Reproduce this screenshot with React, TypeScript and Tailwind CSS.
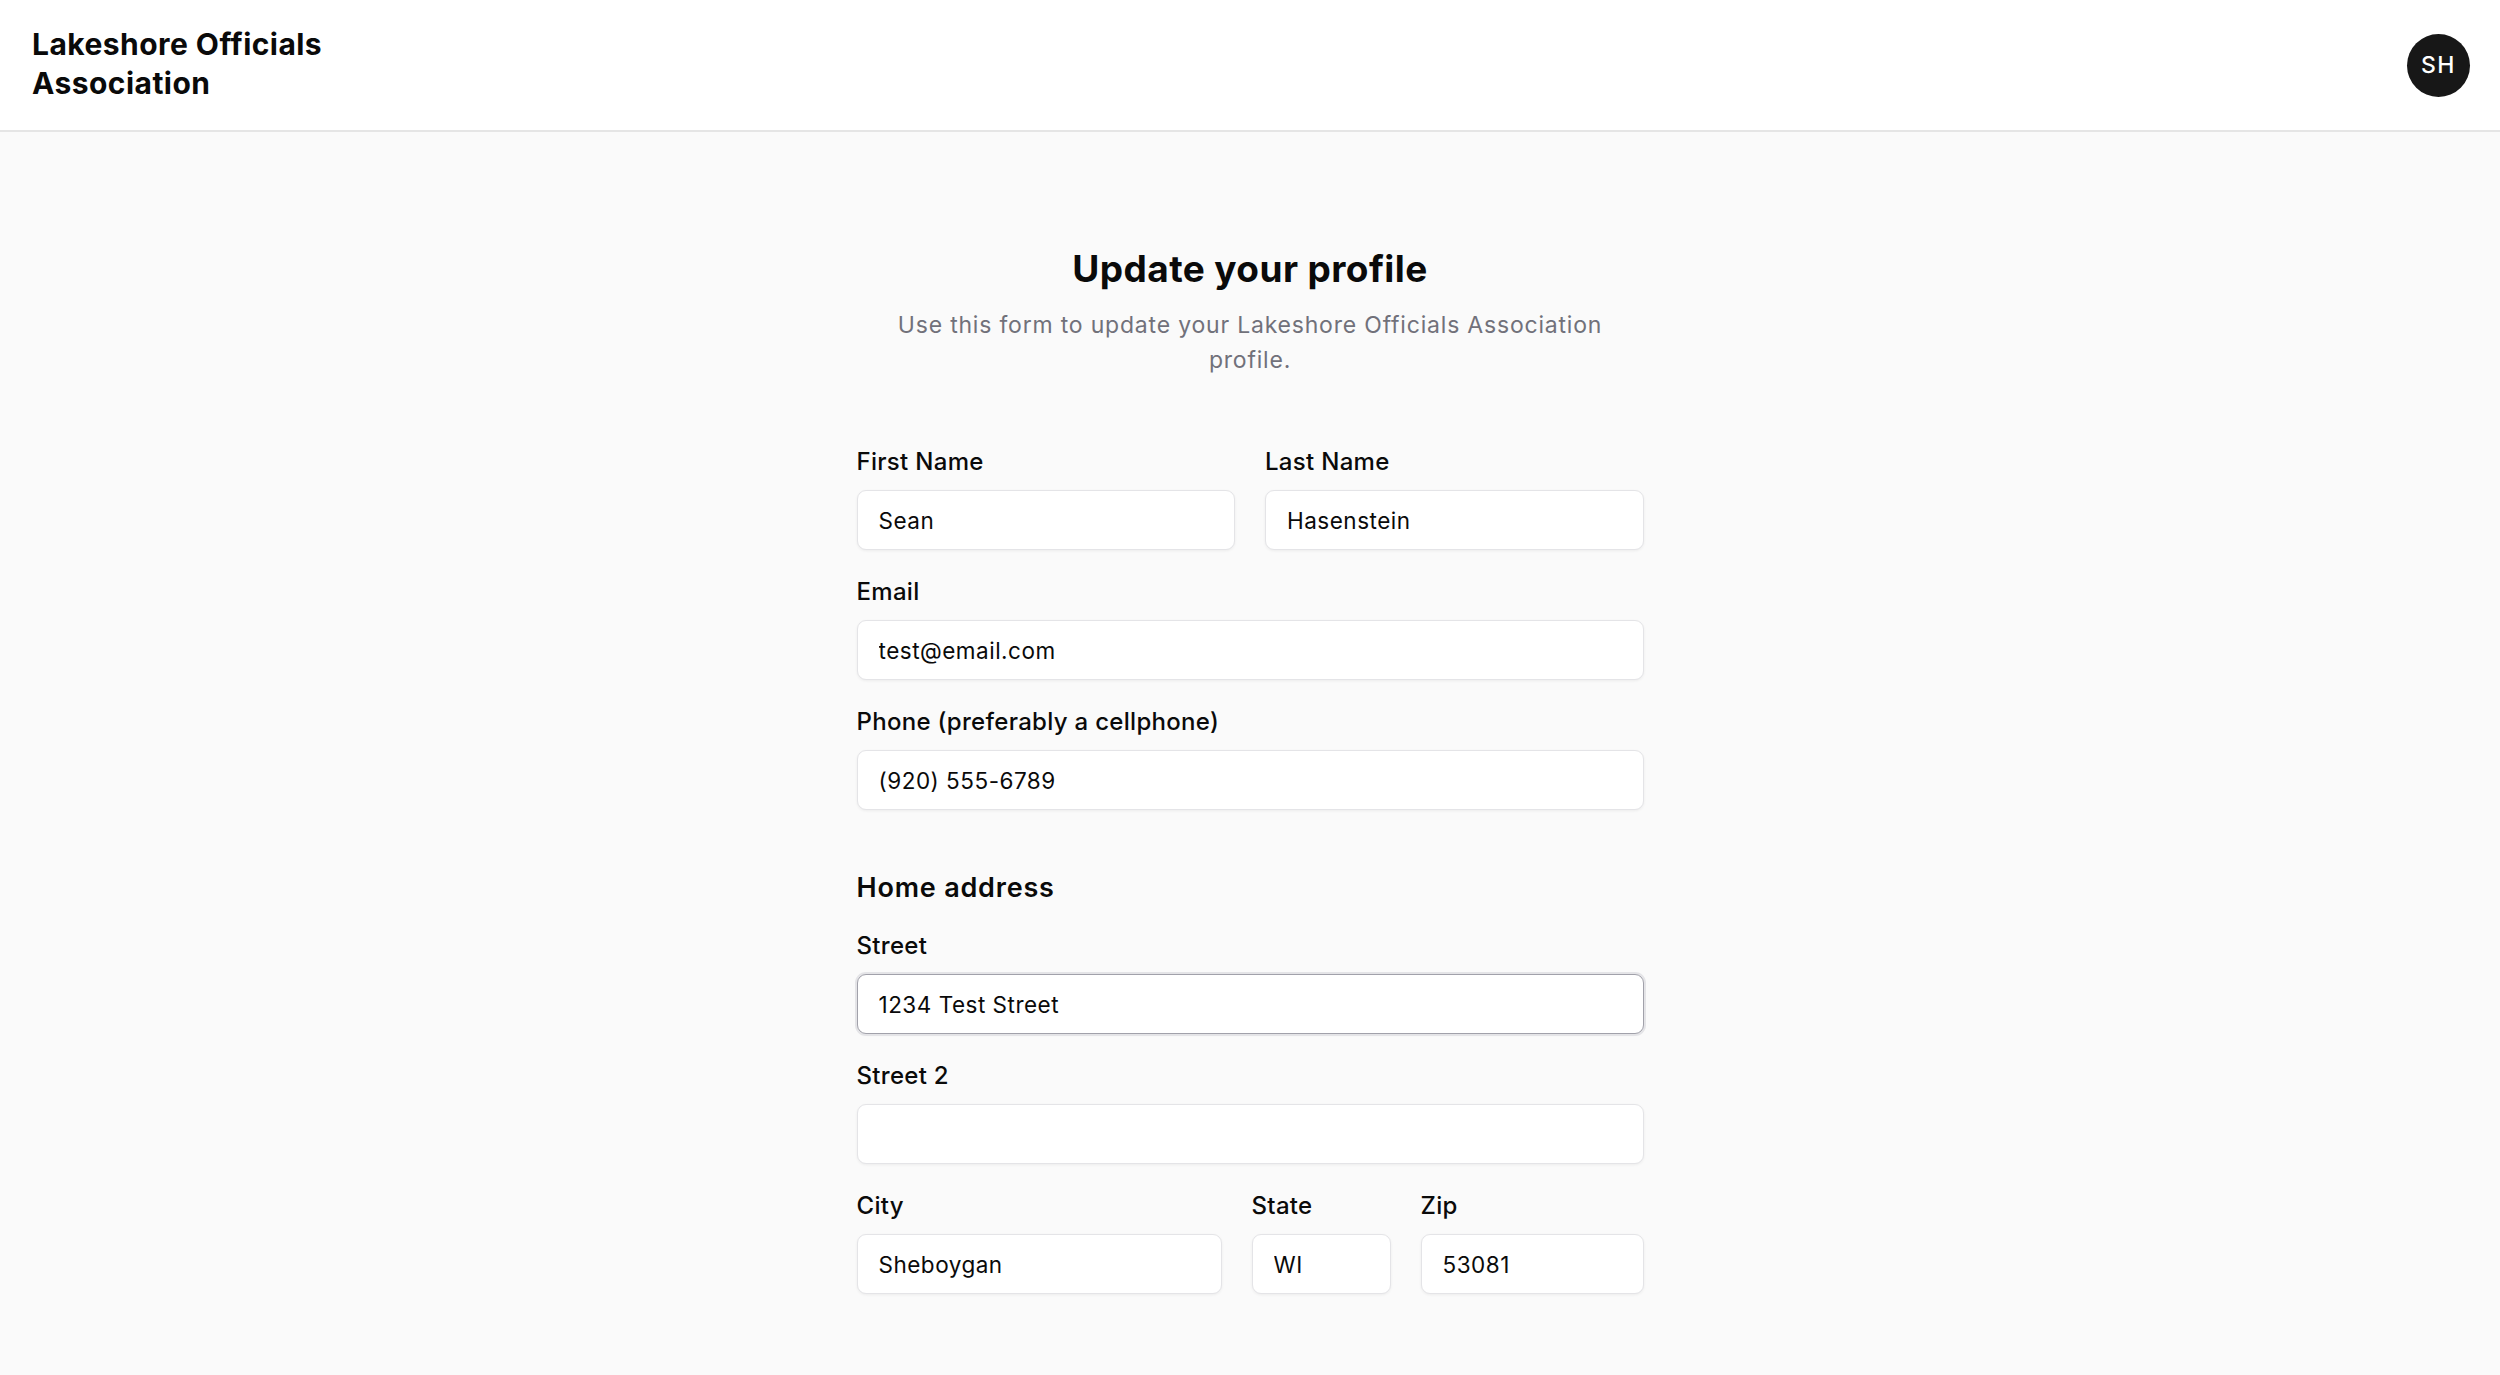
import React from "react";

const font = { fontFamily: "Inter, 'Noto Sans', sans-serif" };

function Field({
  label,
  value,
  focused = false,
  className = "",
}: {
  label: string;
  value: string;
  focused?: boolean;
  className?: string;
}) {
  return (
    <div className={"flex flex-col " + className}>
      <label className="text-[24px] font-medium leading-[36px] tracking-[0.3px] text-[#0a0a0a] mb-[10px]">
        {label}
      </label>
      <input
        readOnly
        value={value}
        className={
          "h-[60px] w-full rounded-[9px] bg-white px-[21px] text-[22.5px] tracking-[0.5px] text-[#0a0a0a] outline-none shadow-[0_1px_3px_rgba(0,0,0,0.06)] " +
          (focused
            ? "border-[1.5px] border-[#a1a1aa] ring-[2px] ring-[#e4e4e7]"
            : "border-[1.5px] border-[#e4e4e7]")
        }
        style={font}
      />
    </div>
  );
}

export default function App() {
  return (
    <div className="min-h-screen bg-[#fafafa]" style={font}>
      <header className="h-[132px] bg-white border-b-2 border-[#e5e5e5] flex items-center justify-between pl-[32px] pr-[30px]">
        <h1 className="w-[340px] -mt-[2px] text-[30px] font-bold leading-[39px] tracking-[0.45px] text-[#0a0a0a]">
          Lakeshore Officials Association
        </h1>
        <div className="w-[63px] h-[63px] rounded-full bg-[#171717] flex items-center justify-center text-white text-[23px] font-medium tracking-[1.5px]">
          SH
        </div>
      </header>

      <main className="pt-[113px] pb-[80px]">
        <div className="w-[787px] mx-auto">
          <h2 className="text-center text-[37px] font-bold leading-[48px] tracking-[0.4px] text-[#0a0a0a]">
            Update your profile
          </h2>
          <p className="mt-[15px] mx-auto max-w-[745px] text-center text-[23px] leading-[35px] tracking-[0.8px] text-[#71717a]">
            Use this form to update your Lakeshore Officials Association profile.
          </p>

          <form className="mt-[66px] flex flex-col">
            <div className="flex flex-col gap-[24px]">
              <div className="grid grid-cols-2 gap-[30px]">
                <Field label="First Name" value="Sean" />
                <Field label="Last Name" value="Hasenstein" />
              </div>
              <Field label="Email" value="test@email.com" />
              <Field label="Phone (preferably a cellphone)" value="(920) 555-6789" />
            </div>

            <h3 className="mt-[58px] mb-[20px] text-[27px] font-semibold leading-[40px] tracking-[0.8px] text-[#0a0a0a]">
              Home address
            </h3>
            <div className="flex flex-col gap-[24px]">
              <Field label="Street" value="1234 Test Street" focused />
              <Field label="Street 2" value="" />
              <div className="flex gap-[30px]">
                <Field label="City" value="Sheboygan" className="flex-1" />
                <Field label="State" value="WI" className="w-[139px]" />
                <Field label="Zip" value="53081" className="w-[223px]" />
              </div>
            </div>
          </form>
        </div>
      </main>
    </div>
  );
}
